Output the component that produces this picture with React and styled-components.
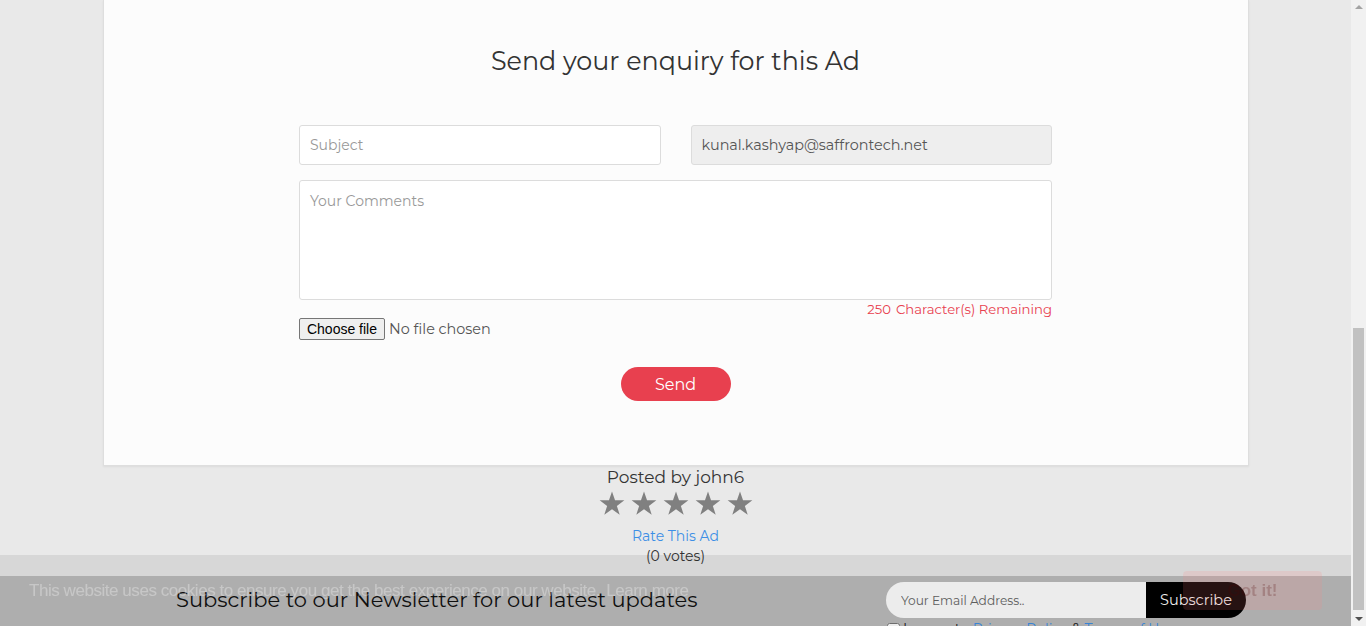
import React from "react";
import styled, { createGlobalStyle } from "styled-components";

const Global = createGlobalStyle`
  html, body { margin: 0; padding: 0; overflow: hidden; }
  body { background: #e9e9e9; font-family: "Montserrat", Inter, "Noto Sans", sans-serif; color: #333; }
  * { box-sizing: border-box; }
`;

const Page = styled.div`
  width: 1351px;
  min-height: 626px;
`;

const Container = styled.div`
  width: 1146px;
  margin: 0 auto;
`;

const Card = styled.div`
  background: #fcfcfc;
  border: 1px solid #dedede;
  border-top: none;
  box-shadow: 0 1px 2px rgba(0, 0, 0, 0.06);
  padding: 46px 0 64px;
`;

const Heading = styled.h2`
  margin: 0;
  text-align: center;
  font-weight: 400;
  font-size: 25.4px;
  line-height: 30px;
  color: #333;
`;

const Form = styled.form`
  width: 753px;
  margin: 49px auto 0;
  display: flex;
  flex-direction: column;
`;

const Row = styled.div`
  display: grid;
  grid-template-columns: 1fr 1fr;
  column-gap: 30px;
`;

const Input = styled.input`
  height: 40px;
  width: 100%;
  border: 1px solid #dcdcdc;
  border-radius: 3px;
  padding: 0 10px;
  font-family: inherit;
  font-size: ${(p) => (p.disabled ? "14.4px" : "14px")};
  color: #555;
  background: ${(p) => (p.disabled ? "#eeeeee" : "#ffffff")};
  &::placeholder { color: #999; }
  &:disabled { color: #555; -webkit-text-fill-color: #555; opacity: 1; }
`;

const TextArea = styled.textarea`
  margin-top: 15px;
  height: 120px;
  width: 100%;
  border: 1px solid #dcdcdc;
  border-radius: 3px;
  padding: 11px 10px;
  font-family: inherit;
  font-size: 14px;
  resize: none;
  background: #fff;
  &::placeholder { color: #999; }
`;

const Remaining = styled.div`
  text-align: right;
  font-size: 13.2px;
  line-height: 18px;
  color: #e8404f;
  span { margin-right: 5px; }
`;

const FileRow = styled.label`
  display: flex;
  align-items: center;
  gap: 4px;
  height: 22px;
  input { display: none; }
`;

const FileButton = styled.span`
  display: inline-flex;
  align-items: center;
  justify-content: center;
  width: 86px;
  height: 22px;
  border: 1px solid #767676;
  border-radius: 2px;
  background: #efefef;
  font-family: "Liberation Sans", Arial, sans-serif;
  font-size: 14px;
  color: #000;
`;

const FileName = styled.span`
  font-size: 14.4px;
  color: #555;
`;

const SendWrap = styled.div`
  display: flex;
  justify-content: center;
  margin-top: 27px;
`;

const SendButton = styled.button`
  width: 110px;
  height: 34px;
  border: none;
  border-radius: 17px;
  background: #e8404f;
  color: #fff;
  font-family: inherit;
  font-size: 16px;
`;

const Meta = styled.div`
  display: flex;
  flex-direction: column;
  align-items: center;
`;

const Posted = styled.div`
  font-size: 17px;
  line-height: 22px;
  color: #333;
`;

const Stars = styled.div`
  display: flex;
  gap: 6px;
  margin-top: 3px;
`;

const RateLink = styled.a`
  margin-top: 11px;
  font-size: 14px;
  line-height: 18px;
  color: #3d8fe6;
  text-decoration: none;
`;

const Votes = styled.div`
  margin-top: 2px;
  font-size: 14px;
  line-height: 18px;
  color: #333;
`;

const Newsletter = styled.section`
  margin-top: 11px;
  background: #bdbdbd;
  height: 80px;
  padding: 6px 0 0 176px;
  display: grid;
  grid-template-columns: 710px auto;
  align-items: start;
`;

const NewsTitle = styled.h3`
  margin: 0;
  font-weight: 400;
  font-size: 21px;
  line-height: 36px;
  color: #111;
`;

const SubscribeForm = styled.div`
  display: flex;
  flex-direction: column;
`;

const InputGroup = styled.div`
  display: flex;
  height: 36px;
`;

const EmailInput = styled.input`
  width: 260px;
  height: 36px;
  border: none;
  border-radius: 18px 0 0 18px;
  background: #fff;
  padding: 0 15px;
  font-family: inherit;
  font-size: 12.2px;
  &::placeholder { color: #666; }
`;

const SubscribeButton = styled.button`
  width: 100px;
  height: 36px;
  border: none;
  border-radius: 0 18px 18px 0;
  background: #000;
  color: #fff;
  font-family: inherit;
  font-size: 14.5px;
`;

const Agree = styled.label`
  display: flex;
  align-items: center;
  gap: 3px;
  margin-top: 2px;
  font-size: 14px;
  color: #222;
  input { margin: 0 0 0 1px; width: 13px; height: 13px; }
  a { color: #3d8fe6; text-decoration: none; }
`;

const CookieBar = styled.div`
  position: fixed;
  left: 0;
  bottom: 0;
  width: 1351px;
  height: 71px;
  background: rgba(0, 0, 0, 0.075);
  display: flex;
  align-items: center;
  justify-content: space-between;
  padding: 0 29px;
`;

const CookieText = styled.div`
  font-family: "Liberation Sans", Arial, sans-serif;
  font-size: 17px;
  letter-spacing: -0.45px;
  color: rgba(255, 255, 255, 0.3);
  a { color: inherit; text-decoration: none; margin-left: 6px; }
`;

const GotIt = styled.button`
  width: 139px;
  height: 39px;
  border: none;
  border-radius: 4px;
  background: rgba(255, 120, 120, 0.15);
  color: rgba(80, 0, 0, 0.22);
  font-family: "Liberation Sans", Arial, sans-serif;
  font-weight: 700;
  font-size: 17px;
`;

const ScrollTrack = styled.div`
  position: fixed;
  top: 0;
  right: 0;
  width: 15px;
  height: 626px;
  background: #f1f1f1;
`;

const ScrollThumb = styled.div`
  position: absolute;
  left: 2px;
  right: 2px;
  top: 328px;
  height: 282px;
  background: #c1c1c1;
`;

const Arrow = styled.div`
  position: absolute;
  left: 4px;
  width: 0;
  height: 0;
  border-left: 4px solid transparent;
  border-right: 4px solid transparent;
  ${(p) =>
    p.down
      ? "bottom: 5px; border-top: 4px solid #505050;"
      : "top: 5px; border-bottom: 4px solid #a3a3a3;"}
`;

const Star = () => (
  <svg width="26" height="25" viewBox="0 0 24 23">
    <path
      d="M12 0.5l2.8 8.1h8.6l-6.9 5.1 2.6 8.2L12 16.9l-7.1 5 2.6-8.2L0.6 8.6h8.6z"
      fill="#808080"
    />
  </svg>
);

export default function App() {
  return (
    <Page>
      <Global />
      <Container>
        <Card>
          <Heading>Send your enquiry for this Ad</Heading>
          <Form onSubmit={(e) => e.preventDefault()}>
            <Row>
              <Input placeholder="Subject" />
              <Input disabled value="kunal.kashyap@saffrontech.net" readOnly />
            </Row>
            <TextArea placeholder="Your Comments" />
            <Remaining>
              <span>250</span>Character(s) Remaining
            </Remaining>
            <FileRow>
              <input type="file" />
              <FileButton>Choose file</FileButton>
              <FileName>No file chosen</FileName>
            </FileRow>
            <SendWrap>
              <SendButton type="button">Send</SendButton>
            </SendWrap>
          </Form>
        </Card>
        <Meta>
          <Posted>Posted by john6</Posted>
          <Stars>
            {[0, 1, 2, 3, 4].map((i) => (
              <Star key={i} />
            ))}
          </Stars>
          <RateLink href="#">Rate This Ad</RateLink>
          <Votes>(0 votes)</Votes>
        </Meta>
      </Container>
      <Newsletter>
        <NewsTitle>Subscribe to our Newsletter for our latest updates</NewsTitle>
        <SubscribeForm>
          <InputGroup>
            <EmailInput placeholder="Your Email Address.." />
            <SubscribeButton type="button">Subscribe</SubscribeButton>
          </InputGroup>
          <Agree>
            <input type="checkbox" />
            <span>
              I agree to <a href="#">Privacy Policy</a> &amp; <a href="#">Terms of Use</a>
            </span>
          </Agree>
        </SubscribeForm>
      </Newsletter>
      <CookieBar>
        <CookieText>
          This website uses cookies to ensure you get the best experience on our website.
          <a href="#">Learn more</a>
        </CookieText>
        <GotIt type="button">Got it!</GotIt>
      </CookieBar>
      <ScrollTrack>
        <Arrow />
        <ScrollThumb />
        <Arrow down />
      </ScrollTrack>
    </Page>
  );
}
